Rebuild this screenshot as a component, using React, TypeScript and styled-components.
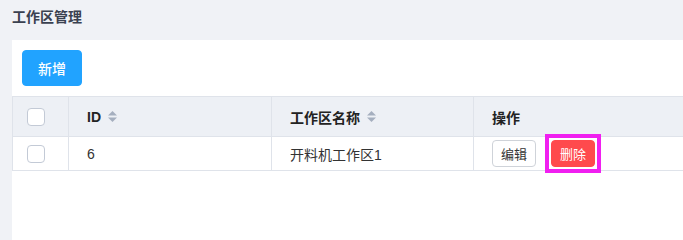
import React from "react";
import styled, { createGlobalStyle } from "styled-components";

const Global = createGlobalStyle`
  html, body, #root { margin: 0; padding: 0; height: 100%; }
  html, body { background: #f0f2f6; overflow: hidden; }
  body { font-family: "Liberation Sans", "Noto Sans CJK SC", sans-serif; }
`;

const Page = styled.div`
  width: 100%;
  height: 100vh;
  box-sizing: border-box;
  padding-left: 12px;
  overflow: hidden;
  display: flex;
  flex-direction: column;
`;

const Title = styled.div`
  flex: none;
  height: 40px;
  box-sizing: border-box;
  padding-top: 8px;
  font-size: 14px;
  line-height: 16px;
  font-weight: 700;
  color: #3a4150;
  font-family: "Noto Sans CJK SC", sans-serif;
`;

const Card = styled.div`
  flex: 1;
  width: 900px;
  background: #fff;
  display: flex;
  flex-direction: column;
`;

const Toolbar = styled.div`
  padding: 10px;
  display: flex;
`;

const Button = styled.button<{ $variant: "primary" | "default" | "danger"; $size?: "lg" | "sm" }>`
  box-sizing: border-box;
  border-radius: 4px;
  font-family: "Noto Sans CJK SC", sans-serif;
  cursor: pointer;
  display: inline-flex;
  align-items: center;
  justify-content: center;
  padding: 0;
  width: ${(p) => (p.$size === "lg" ? "60px" : "44px")};
  height: ${(p) => (p.$size === "lg" ? "36px" : "27px")};
  font-size: ${(p) => (p.$size === "lg" ? "14px" : "13px")};
  font-weight: ${(p) => (p.$size === "lg" ? 500 : 400)};
  border: 1px solid
    ${(p) => (p.$variant === "primary" ? "#21a3ff" : p.$variant === "danger" ? "#ff4a4d" : "#cfd3d9")};
  background: ${(p) => (p.$variant === "primary" ? "#21a3ff" : p.$variant === "danger" ? "#ff4a4d" : "#fff")};
  color: ${(p) => (p.$variant === "default" ? "#333" : "#fff")};
`;

const Highlight = styled.span`
  display: inline-flex;
  outline: 4px solid #f01ff0;
  outline-offset: 2px;
`;

const Table = styled.table`
  border-collapse: collapse;
  table-layout: fixed;
  width: 900px;
  border-left: 1px solid #dfe3ea;
  font-size: 14px;
  color: #333;
`;

const Th = styled.th<{ $w?: number }>`
  ${(p) => (p.$w ? `width: ${p.$w}px;` : "")}
  height: 40px;
  box-sizing: border-box;
  background: #edf0f5;
  border-top: 1px solid #dfe3ea;
  border-bottom: 1px solid #dfe3ea;
  border-right: 1px solid #dfe3ea;
  text-align: left;
  padding: 0 0 0 18px;
  font-weight: 700;
  color: #222;
  font-family: "Liberation Sans", "Noto Sans CJK SC", sans-serif;
`;

const CheckTh = styled(Th)`
  padding-left: 14px;
`;

const Td = styled.td`
  height: 34px;
  box-sizing: border-box;
  border-bottom: 1px solid #dfe3ea;
  border-right: 1px solid #dfe3ea;
  padding: 0 0 0 18px;
  color: #333;
`;

const CheckTd = styled(Td)`
  padding-left: 14px;
`;

const HeadLabel = styled.span`
  display: inline-flex;
  align-items: center;
  gap: 7px;
`;

const Box = styled.span`
  display: block;
  width: 18px;
  height: 18px;
  box-sizing: border-box;
  border: 1px solid #c3cad6;
  border-radius: 4px;
  background: #fff;
`;

const Actions = styled.div`
  display: flex;
  align-items: center;
  gap: 15px;
`;

const Sort = () => (
  <svg width="9" height="11" viewBox="0 0 9 11">
    <path d="M4.5 0 L9 4.5 H0 Z" fill="#a5afbf" />
    <path d="M0 6.5 H9 L4.5 11 Z" fill="#a5afbf" />
  </svg>
);

export default function App() {
  return (
    <>
      <Global />
      <Page>
        <Title>工作区管理</Title>
        <Card>
          <Toolbar>
            <Button $variant="primary" $size="lg">新增</Button>
          </Toolbar>
          <Table>
            <thead>
              <tr>
                <CheckTh $w={56}><Box /></CheckTh>
                <Th $w={203}><HeadLabel>ID <Sort /></HeadLabel></Th>
                <Th $w={202}><HeadLabel>工作区名称 <Sort /></HeadLabel></Th>
                <Th>操作</Th>
              </tr>
            </thead>
            <tbody>
              <tr>
                <CheckTd><Box /></CheckTd>
                <Td>6</Td>
                <Td>开料机工作区1</Td>
                <Td>
                  <Actions>
                    <Button $variant="default">编辑</Button>
                    <Highlight>
                      <Button $variant="danger">删除</Button>
                    </Highlight>
                  </Actions>
                </Td>
              </tr>
            </tbody>
          </Table>
        </Card>
      </Page>
    </>
  );
}
